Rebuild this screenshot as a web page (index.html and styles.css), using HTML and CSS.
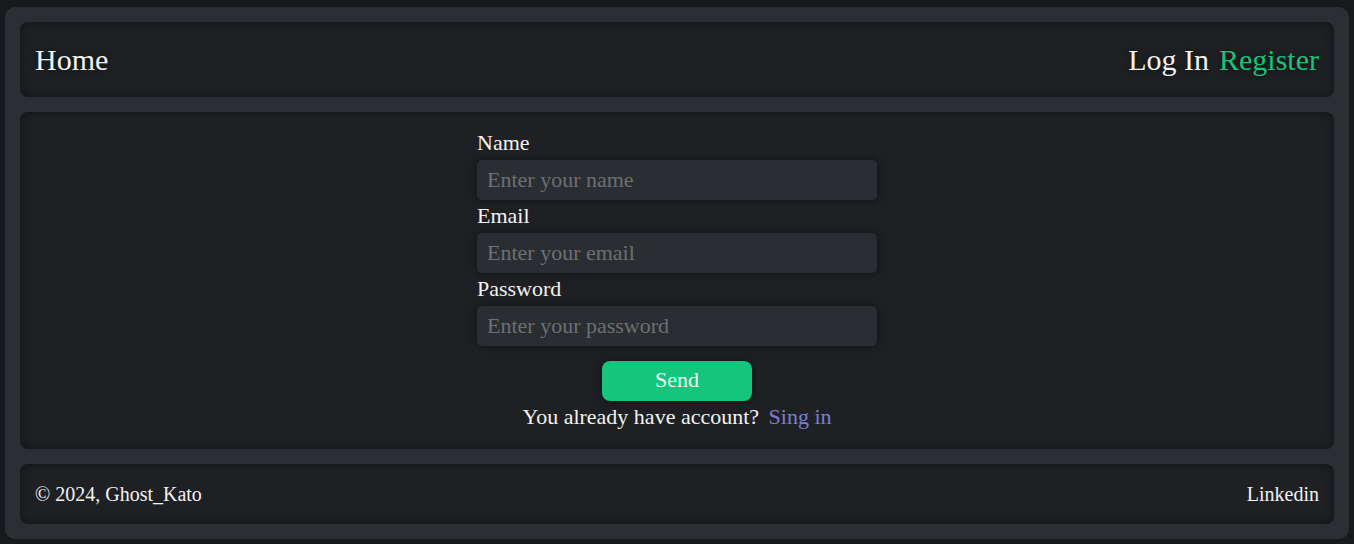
FILE: index.html
```html
<!DOCTYPE html>
<html lang="en">
<head>
<meta charset="utf-8">
<title>Register</title>
<link rel="stylesheet" href="styles.css">
</head>
<body>
<div class="app">
  <header class="panel header">
    <a class="home" href="#">Home</a>
    <nav class="auth">
      <a class="login" href="#">Log In</a>
      <a class="register" href="#">Register</a>
    </nav>
  </header>
  <main class="panel main">
    <form class="form">
      <label class="label" for="name">Name</label>
      <input class="input" id="name" type="text" placeholder="Enter your name">
      <label class="label" for="email">Email</label>
      <input class="input" id="email" type="email" placeholder="Enter your email">
      <label class="label" for="password">Password</label>
      <input class="input" id="password" type="password" placeholder="Enter your password">
      <button class="send" type="button">Send</button>
      <p class="already">You already have account? <a class="signin" href="#">Sing in</a></p>
    </form>
  </main>
  <footer class="panel footer">
    <span class="copy">© 2024, Ghost_Kato</span>
    <a class="linkedin" href="#">Linkedin</a>
  </footer>
</div>
</body>
</html>
```

FILE: styles.css
```css
* { box-sizing: border-box; }
html, body { height: 100%; }
body {
  margin: 0;
  padding: 7px 5px 4px;
  background: #18191c;
  font-family: "Liberation Serif", "Times New Roman", serif;
  color: #f2f2f2;
}
a { text-decoration: none; color: inherit; }

.app {
  background: #2b2e33;
  border-radius: 10px;
  padding: 15px;
  display: flex;
  flex-direction: column;
  gap: 15px;
  height: 532px;
}

.panel {
  background: #1f2023;
  border-radius: 8px;
  box-shadow: inset 0 0 10px rgba(0, 0, 0, 0.45);
}

.header {
  height: 75px;
  padding: 0 15px;
  display: flex;
  align-items: center;
  justify-content: space-between;
  font-size: 30px;
  text-shadow: 0 0 6px rgba(0, 0, 0, 0.6);
}
.auth { display: flex; gap: 10px; }
.register { color: #17c27a; }

.main {
  flex: 1;
  padding: 20px 0 19px;
  display: flex;
  justify-content: center;
}
.form {
  width: 400px;
  display: flex;
  flex-direction: column;
  font-size: 22px;
}
.label {
  line-height: 21px;
  margin-bottom: 7px;
}
.input {
  height: 40px;
  margin: 0 0 5px;
  border: none;
  outline: none;
  border-radius: 5px;
  background: #2a2d32;
  color: #e0e0e0;
  font-family: inherit;
  font-size: 22px;
  padding: 0 10px;
  box-shadow: 0 0 10px rgba(0, 0, 0, 0.5);
}
.input::placeholder { color: #6e6f70; }

.send {
  align-self: center;
  width: 150px;
  height: 40px;
  margin-top: 10px;
  border: none;
  border-radius: 8px;
  background: #14c57c;
  color: #eef7f1;
  font-family: inherit;
  font-size: 22px;
  line-height: 38px;
  padding: 0 0 2px;
  box-shadow: 0 0 10px rgba(0, 0, 0, 0.5);
}
.already {
  margin: 3px 0 0;
  text-align: center;
  line-height: 25px;
}
.signin { color: #7b7ed0; margin-left: 4px; }

.footer {
  height: 60px;
  padding: 0 15px;
  display: flex;
  align-items: center;
  justify-content: space-between;
  font-size: 20px;
}
```
